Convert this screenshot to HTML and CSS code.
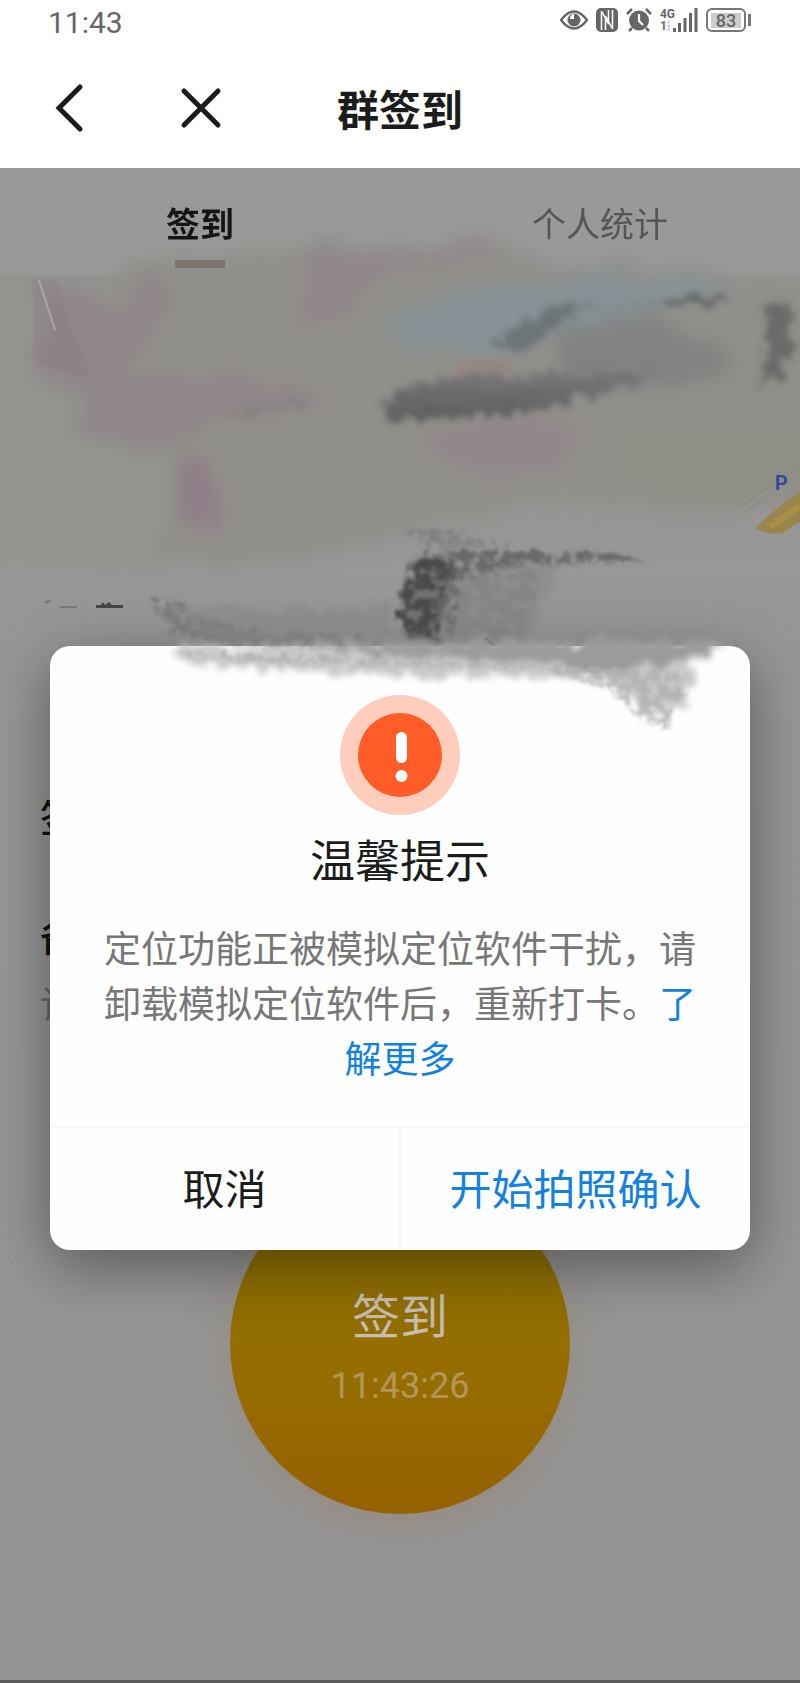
FILE: index.html
```html
<!DOCTYPE html>
<html lang="zh-CN">
<head>
<meta charset="utf-8">
<meta name="viewport" content="width=device-width, initial-scale=1">
<title>群签到</title>
<link rel="stylesheet" href="styles.css">
</head>
<body>
<div class="status">
  <span class="status-time">11:43</span>
  <div class="status-icons">
    <svg width="28" height="20" viewBox="0 0 28 20"><path d="M1 10Q14-7 27 10Q14 27 1 10Z" fill="none" stroke="#666" stroke-width="2.4"/><circle cx="14" cy="10" r="6.5" fill="#666"/><path d="M14 4v5h-4a5 5 0 0 1 4-5z" fill="#fff"/></svg>
    <svg width="22" height="24" viewBox="0 0 22 24"><rect width="22" height="24" rx="5" fill="#666"/><path d="M5.500 3v19M16.500 2v19M9.500 22V8l7 13M12.500 2v14L5.500 3" fill="none" stroke="#fff" stroke-width="1.500"/></svg>
    <svg width="26" height="24" viewBox="0 0 26 24"><circle cx="13" cy="12.500" r="10" fill="#666"/><path d="M1 6l5-5M25 6l-5-5M6 20l-3 3M20 20l3 3" stroke="#666" stroke-width="2.500"/><path d="M13 6v7l4 4" fill="none" stroke="#fff" stroke-width="2.200"/></svg>
    <div class="network"><span>4G</span><span>1<i>⁝</i></span></div>
    <svg class="signal" width="25" height="24" viewBox="0 0 25 24" fill="#666"><rect y="20" width="3" height="4"/><rect x="5" y="15" width="3" height="9"/><rect x="10.500" y="10" width="3" height="14"/><rect x="16" y="5" width="3" height="19"/><rect x="21.500" width="3" height="24"/></svg>
    <div class="battery"><span>83</span></div>
  </div>
</div>
<header class="header">
  <button class="nav-btn" aria-label="返回"><svg width="48" height="56" viewBox="0 0 48 56"><path d="M34 7L13 28l21 21" fill="none" stroke="#1c1c1c" stroke-width="5" stroke-linecap="round"/></svg></button>
  <button class="nav-btn" aria-label="关闭"><svg width="48" height="56" viewBox="0 0 48 56"><path d="M6 11l34 34M40 11L6 45" fill="none" stroke="#1c1c1c" stroke-width="5" stroke-linecap="round"/></svg></button>
  <h1 class="title">群签到</h1>
</header>
<main class="screen">
  <nav class="tabs">
    <a class="tab tab-active" href="#sign">签到</a>
    <a class="tab" href="#stats">个人统计</a>
  </nav>
  <div class="map"></div>
  <div class="form">
    <span class="label">签</span>
    <span class="label">备</span>
    <span class="hint">请</span>
  </div>
  <button class="sign-btn"><span class="sign-text">签到</span><span class="sign-time">11:43:26</span></button>

  <section class="dialog" role="dialog" aria-labelledby="dialog-title">
    <div class="dialog-body">
      <svg width="120" height="120" viewBox="0 0 120 120"><circle cx="60" cy="60" r="60" fill="#ffcdbc"/><circle cx="60" cy="60" r="42" fill="#ff5c28"/><rect x="56" y="37" width="11" height="31" rx="5.500" fill="#fff"/><circle cx="61.500" cy="81" r="6" fill="#fff"/></svg>
      <h2 class="dialog-title" id="dialog-title">温馨提示</h2>
      <p class="message">定位功能正被模拟定位软件干扰，请卸载模拟定位软件后，重新打卡。<a href="#more">了解更多</a></p>
    </div>
    <div class="actions">
      <button class="action">取消</button>
      <button class="action action-primary">开始拍照确认</button>
    </div>
  </section>

  <svg class="paint" viewBox="0 168 800 600" preserveAspectRatio="none" aria-hidden="true">
    <defs>
      <filter id="wash" x="-20%" y="-20%" width="140%" height="140%"><feTurbulence type="fractalNoise" baseFrequency=".02" numOctaves="3" seed="4"/><feDisplacementMap in="SourceGraphic" scale="36" xChannelSelector="R" yChannelSelector="G"/><feGaussianBlur stdDeviation="9"/></filter>
      <filter id="brush" x="-20%" y="-30%" width="140%" height="160%"><feTurbulence type="fractalNoise" baseFrequency=".07" numOctaves="3" seed="8"/><feDisplacementMap in="SourceGraphic" scale="26" xChannelSelector="R" yChannelSelector="G"/><feGaussianBlur stdDeviation="3"/></filter>
      <filter id="chalk" x="-20%" y="-30%" width="140%" height="160%"><feTurbulence type="fractalNoise" baseFrequency=".1" numOctaves="3" seed="3" result="n"/><feDisplacementMap in="SourceGraphic" in2="n" scale="22" xChannelSelector="R" yChannelSelector="G" result="d"/><feColorMatrix in="n" type="matrix" values="0 0 0 0 0  0 0 0 0 0  0 0 0 0 0  0 4 0 0 -1.200" result="m"/><feComposite in="d" in2="m" operator="in"/><feGaussianBlur stdDeviation="1.500"/></filter>
      <linearGradient id="smear" x1="0" y1="0" x2="0" y2="1"><stop offset="0" stop-color="#77777a"/><stop offset="1" stop-color="#5a5a5c"/></linearGradient>
    </defs>
    <g filter="url(#wash)">
      <path d="M125 270Q170 250 270 248L500 242Q560 260 640 266Q740 275 830 300V500L720 510Q540 490 420 525Q310 570 180 565L-20 560V300H110Z" fill="#918f89"/>
      <path d="M-20 300H40L60 400L180 460L160 560H-20Z" fill="#92948e"/>
      <path d="M40 280L130 310L151 262L170 300L130 370L220 386L320 390L300 410L210 420L160 450L60 440L95 400L40 365Z" fill="#8f858a"/>
      <path d="M300 258L490 244L490 258L380 272L360 300L300 322Z" fill="#90868a"/>
      <path d="M180 458L216 458L220 525H180Z" fill="#907e88"/>
      <path d="M425 430L570 412L570 468L450 478Z" fill="#91878a"/>
      <path d="M385 315L470 290L600 272L730 288L680 305L570 330L500 355L400 345Z" fill="#879296"/>
      <path d="M560 335Q640 300 700 340Q750 375 720 380Q660 392 570 380Z" fill="#828282"/>
      <path d="M640 435L800 440V490L700 500L640 480Z" fill="#8f8f85"/>
    </g>
    <path d="M440 380L465 364L508 360L512 382L490 392Z" fill="#98837f" opacity=".7" filter="url(#brush)"/>
    <path d="M32 279H58L72 335L90 372L80 378L36 362Z" fill="#8b7e86" opacity=".4"/>
    <path d="M39 280L55 330" stroke="#aaa6a8" stroke-width="2"/>
    <g filter="url(#brush)">
      <path d="M378 408Q395 376 500 374Q590 370 660 376Q610 392 560 402Q520 418 440 416Q410 426 378 408Z" fill="url(#smear)" opacity=".95"/>
      <path d="M492 350Q520 318 555 306L590 302Q560 325 520 355Z" fill="#626567" opacity=".65"/>
      <path d="M580 310Q620 308 660 300" fill="none" stroke="#7c7e7e" stroke-width="4" opacity=".5"/>
      <path d="M660 304Q690 294 725 297L730 302Q690 305 662 309Z" fill="#5c6060" opacity=".9"/>
      <path d="M760 306L788 304L794 345L782 375L757 388L768 350Z" fill="#5c5f60" opacity=".75"/>
      <path d="M230 418L250 410L300 404" fill="none" stroke="#7f7a79" stroke-width="5" opacity=".7"/>
    </g>
    <path d="M455 565L560 560L525 645H430Z" fill="#808080" opacity=".35" filter="url(#brush)"/>
    <path d="M402 635Q398 580 430 558L460 556Q440 595 438 640Z" fill="#666" opacity=".7" filter="url(#brush)"/>
    <g filter="url(#chalk)">
      <path d="M402 625Q392 575 425 552L475 552L620 554L645 562L550 565Q485 565 460 585Q455 620 450 646H410Z" fill="#5b5b5b" opacity=".75"/>
      <path d="M405 635Q392 580 430 555L455 565Q435 595 440 640Z" fill="#484848"/>
      <path d="M455 575L540 570L520 645H440Z" fill="#777" opacity=".4"/>
      <path d="M405 530L450 528L510 548H430Z" fill="#828282"/>
      <path d="M150 598L190 610L230 628L370 640V649H270L175 635Z" fill="#747474" opacity=".8"/>
    </g>
    <path d="M165 605Q260 615 390 605V648Q280 650 195 635Z" fill="#838383" opacity=".5" filter="url(#brush)"/>
    <path d="M478 645l8-8 10 9Z" fill="#444"/>
    <g filter="url(#brush)">
      <path d="M175 644Q300 648 440 644L728 642L694 662L684 708L655 716L616 682L545 676Q380 678 180 664Z" fill="#bbb" opacity=".8"/>
      <path d="M290 642L722 640L680 664L600 676L540 662L380 656Z" fill="#9b9b9b"/>
    </g>
    <path d="M170 655L280 665L540 670L610 690L640 720L670 730L690 675L600 668L220 655Z" fill="#b0b0b0" opacity=".8" filter="url(#chalk)"/>
    <path d="M45 603l6-3M60 607h17" fill="none" stroke="#777" stroke-width="2"/>
    <path d="M96 605l5 0 2-3 2 3 4-3 3 3h11v3H96Z" fill="#444"/>
    <path d="M756 528Q770 512 800 492V522L782 533Q765 535 756 528Z" fill="#9a854c"/>
    <path d="M770 527L800 506" stroke="#a88f45" stroke-width="6"/>
    <path d="M738 508l60-40M742 514l23-16" stroke="#858580"/>
    <text class="map-mark" x="775" y="490">P</text>
  </svg>
</main>
</body>
</html>
```
FILE: styles.css
```css
* { box-sizing: border-box; }
body {
  margin: 0;
  min-height: 100vh;
  display: flex;
  flex-direction: column;
  background: #fff;
  color: #1c1c1c;
  font-family: Roboto, "Noto Sans CJK SC", sans-serif;
}
button { border: 0; padding: 0; background: none; color: inherit; font: inherit; cursor: pointer; }
a { text-decoration: none; }
svg { display: block; flex: none; }

.status {
  height: 44px;
  padding: 0 48px;
  display: flex;
  align-items: center;
  justify-content: space-between;
  color: #666;
}
.status-time { font-size: 30px; }
.status-icons { display: flex; align-items: center; gap: 8px; padding-bottom: 4px; }
.network { display: flex; flex-direction: column; font-size: 12px; font-weight: 700; line-height: 12px; }
.network i { font-style: normal; color: #bbb; }
.signal { margin-left: -10px; }
.battery {
  position: relative;
  width: 40px;
  height: 24px;
  margin-right: 6px;
  padding: 3px;
  border: 2px solid #777;
  border-radius: 6px;
}
.battery span { display: block; background: #ccc; font-size: 18px; font-weight: 500; line-height: 15px; text-align: center; }
.battery::after { content: ""; position: absolute; right: -7px; top: 4px; width: 3px; height: 12px; background: #777; }

.header {
  position: relative;
  height: 124px;
  padding: 4px 46px 0;
  display: flex;
  align-items: center;
  gap: 84px;
}
.title { position: absolute; left: 0; right: 0; margin: 0; padding-top: 8px; font-size: 42px; line-height: 60px; font-weight: 700; text-align: center; pointer-events: none; }

.screen {
  position: relative;
  flex: 1;
  display: flex;
  flex-direction: column;
  padding-bottom: 166px;
  background: linear-gradient(#999799, #959595 80%);
  border-bottom: 3px solid #5a5a5a;
}
.tabs { display: flex; height: 107px; background: #999; }
.tab { position: relative; z-index: 1; flex: 1; display: flex; justify-content: center; padding-top: 32px; font-size: 34px; line-height: 50px; color: #555; }
.tab-active { color: #151515; font-weight: 700; }
.tab-active::after { content: ""; position: absolute; top: 92px; width: 50px; height: 8px; background: #7b756e; }
.map { height: 300px; background: linear-gradient(#92948f 50%, #999799); }
.form { display: flex; flex-direction: column; padding: 216px 40px 0; font-size: 38px; line-height: 56px; }
.label { margin-bottom: 63px; color: #111; font-weight: 500; }
.label + .label { margin-bottom: 11px; }
.hint { color: #666; }

.sign-btn {
  width: 340px;
  height: 340px;
  margin: auto auto 0;
  padding-top: 4px;
  display: flex;
  flex-direction: column;
  align-items: center;
  justify-content: center;
  gap: 8px;
  border-radius: 50%;
  background: linear-gradient(#8c7000 20%, #966d00 60%, #946200);
  box-shadow: 0 12px 44px rgba(150, 125, 95, .4);
  color: #c7bdb0;
}
.sign-text { font-size: 48px; line-height: 72px; }
.sign-time { font-size: 36px; line-height: 48px; color: #b39658; }

.dialog {
  position: absolute;
  top: 478px;
  left: 50px;
  right: 50px;
  border-radius: 20px;
  background: #fefefe;
  box-shadow: 0 16px 60px rgba(0, 0, 0, .4);
}
.dialog-body { display: flex; flex-direction: column; align-items: center; padding: 49px 46px 38px; }
.dialog-title { margin: 18px 0 30px; font-size: 45px; line-height: 60px; font-weight: 400; }
.message { margin: 0; max-width: 608px; font-size: 37px; line-height: 55px; color: #777; text-align: center; }
.message a { color: #1281e0; }
.actions { display: flex; border-top: 2px solid #f7f7f7; }
.action { flex: 1; height: 122px; padding-bottom: 6px; font-size: 42px; }
.action-primary { border-left: 2px solid #f7f7f7; color: #1281e0; }

.paint { position: absolute; top: 0; left: 0; width: 100%; height: 600px; pointer-events: none; }
.map-mark { font: 700 20px Roboto, sans-serif; fill: #304b9c; }
```
